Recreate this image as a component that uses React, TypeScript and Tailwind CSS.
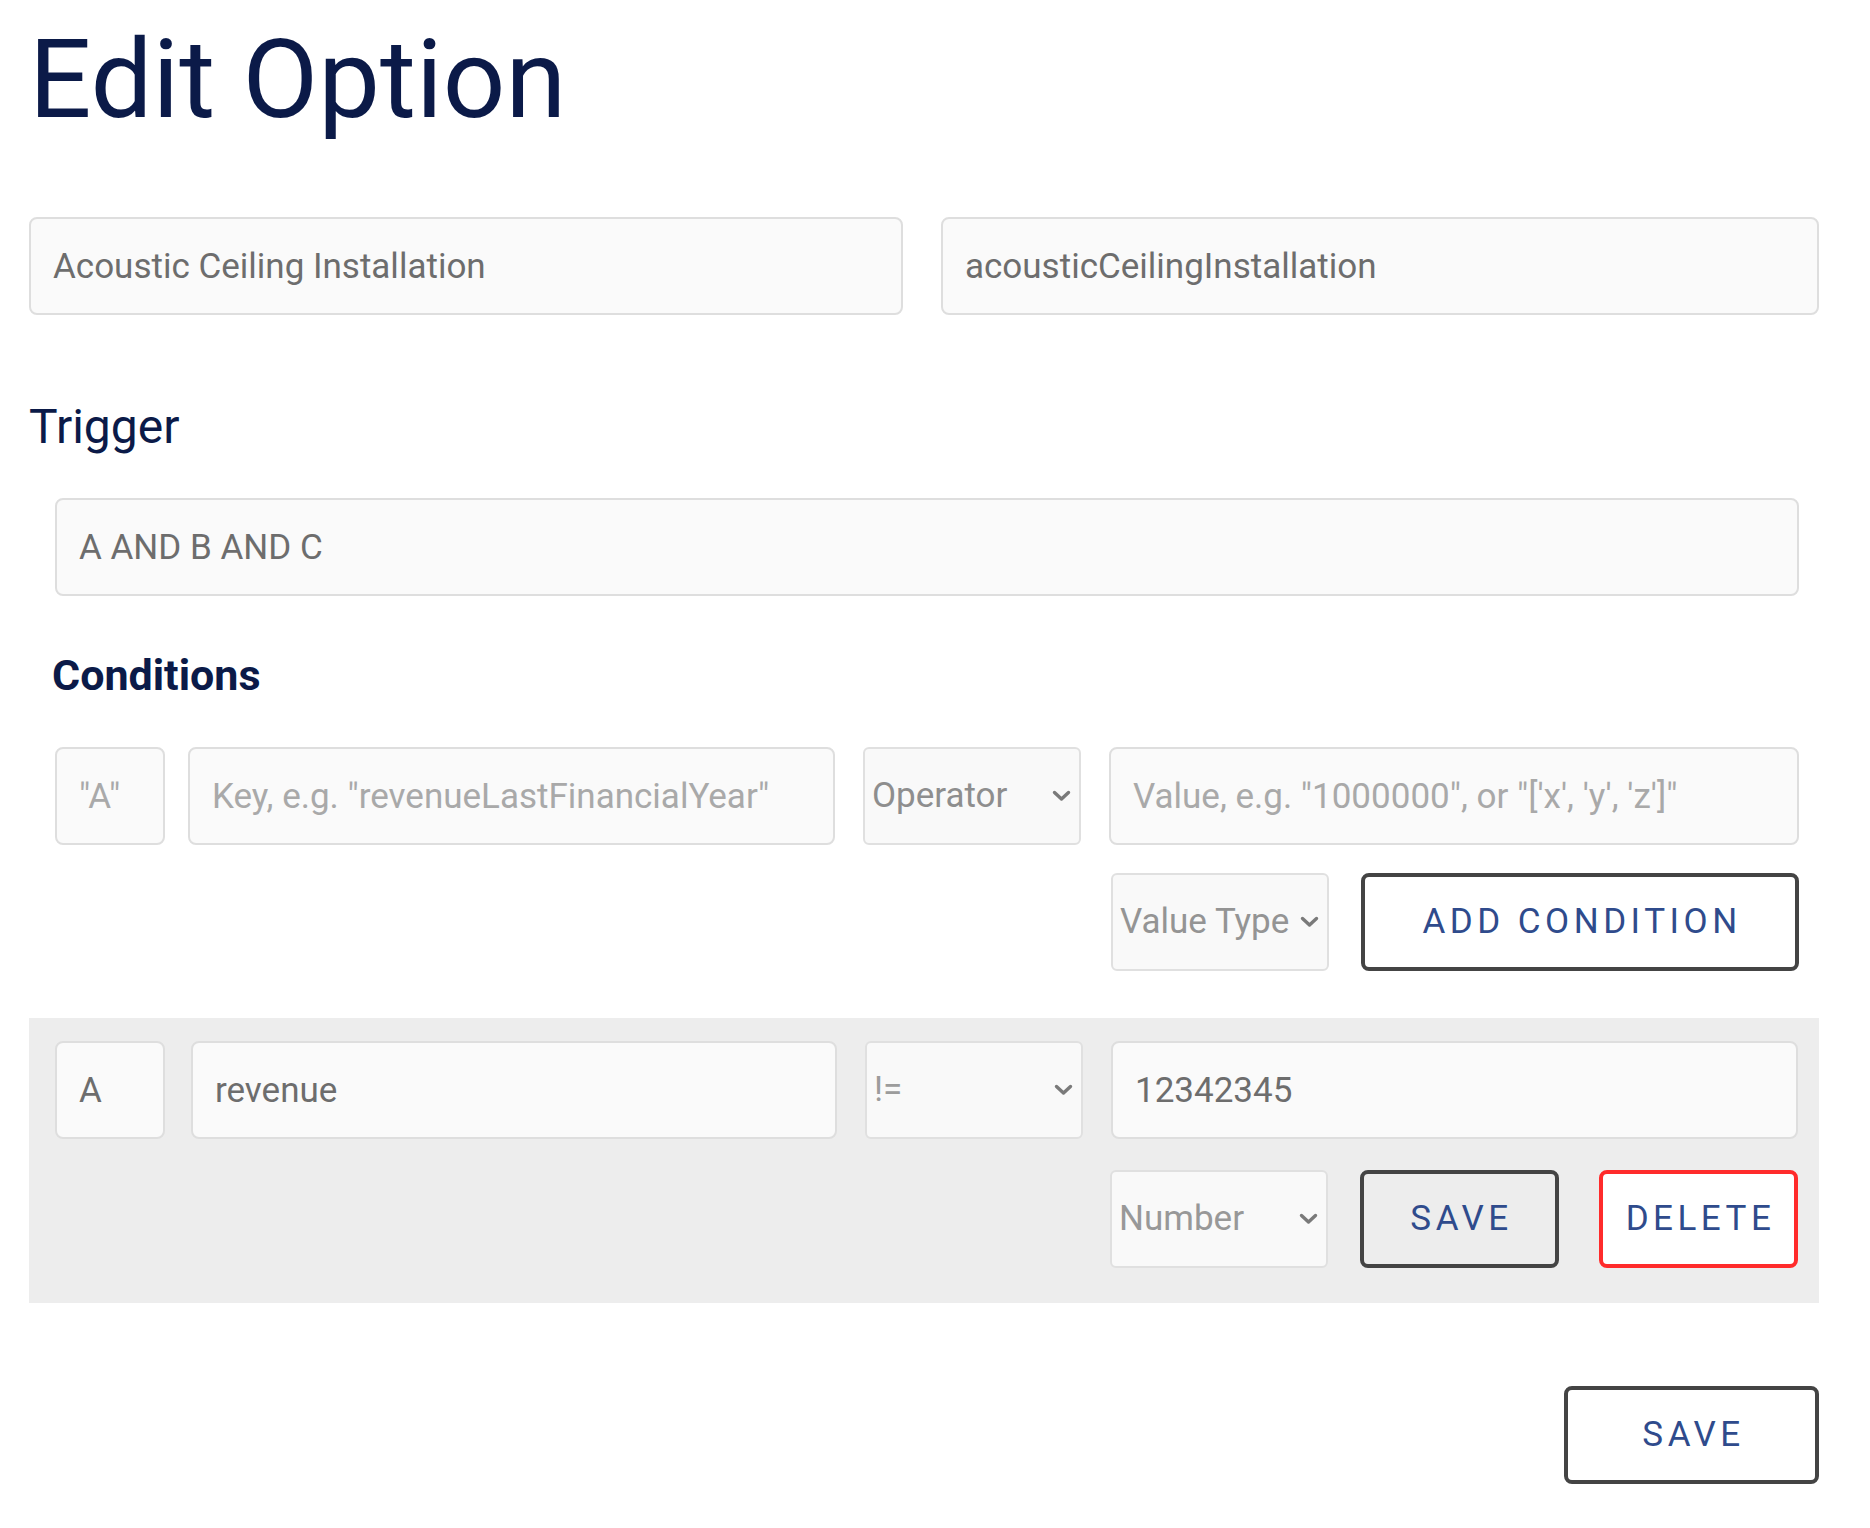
import React from "react";

// Reusable field pieces for the option editor
function Field({
  value,
  placeholder,
  className = "",
}: {
  value?: string;
  placeholder?: string;
  className?: string;
}) {
  return (
    <input
      readOnly
      defaultValue={value}
      placeholder={placeholder}
      className={`h-[98px] min-w-0 rounded-[8px] border-2 border-[#dedede] bg-[#fafafa] pl-[22px] pr-[12px] text-[35px] text-[#6d6d6d] outline-none placeholder:text-[#a9a9a9] ${className}`}
    />
  );
}

function Chevron() {
  return (
    <svg width="19" height="12" viewBox="0 0 19 12" className="shrink-0">
      <path d="M2.5 2.5 L9.5 9 L16.5 2.5" fill="none" stroke="#7a7a7a" strokeWidth="3.4" strokeLinecap="round" strokeLinejoin="round" />
    </svg>
  );
}

function SelectBox({ label, tone, className = "" }: { label: string; tone: string; className?: string }) {
  return (
    <div
      className={`flex h-[98px] w-[218px] shrink-0 items-center gap-[10px] rounded-[6px] border-2 border-[#e0e0e0] bg-[#f9f9f9] pl-[7px] pr-[8px] text-[35px] ${className}`}
    >
      <span className={`min-w-0 flex-1 overflow-hidden whitespace-nowrap ${tone}`}>{label}</span>
      <Chevron />
    </div>
  );
}

function OutlineButton({ label, className = "" }: { label: string; className?: string }) {
  return (
    <button
      type="button"
      className={`flex h-[98px] shrink-0 items-center justify-center rounded-[8px] border-4 pl-[4px] text-[35px] uppercase tracking-[4.5px] text-[#2f4b8c] ${className}`}
    >
      {label}
    </button>
  );
}

export default function App() {
  return (
    <div className="min-h-[1528px] bg-white pl-[29px] pr-[51px] pt-[25px] font-['Roboto',_'Noto_Sans',_sans-serif]">
      <h1 className="text-[110px] leading-[110px] text-[#0b1a48]">Edit Option</h1>

      {/* Name + key */}
      <div className="mt-[82px] grid grid-cols-[874px_1fr] gap-[38px]">
        <Field value="Acoustic Ceiling Installation" />
        <Field value="acousticCeilingInstallation" />
      </div>

      <h2 className="mt-[88px] text-[48px] leading-[48px] text-[#0b1a48]">Trigger</h2>

      <div className="pl-[26px] pr-[20px]">
        <Field value="A AND B AND C" className="mt-[47px] w-full" />

        <h3 className="mt-[58px] -ml-[3px] text-[43px] font-bold leading-[43px] text-[#0b1a48]">Conditions</h3>

        {/* New condition */}
        <div className="mt-[50px] flex">
          <Field placeholder={'"A"'} className="w-[110px] shrink-0" />
          <Field placeholder={'Key, e.g. "revenueLastFinancialYear"'} className="ml-[23px] w-[647px] shrink-0" />
          <SelectBox label="Operator" tone="text-[#8e8e8e]" className="ml-[28px]" />
          <Field placeholder={"Value, e.g. \"1000000\", or \"['x', 'y', 'z']\""} className="ml-[28px] flex-1" />
        </div>
        <div className="mt-[28px] flex justify-end">
          <SelectBox label="Value Type" tone="text-[#949494]" className="rounded-[4px] bg-[#f7f7f7]" />
          <OutlineButton label="Add Condition" className="ml-[32px] w-[438px] border-[#444444] bg-white" />
        </div>
      </div>

      {/* Existing condition */}
      <div className="mt-[47px] bg-[#ededed] pb-[35px] pl-[26px] pr-[21px] pt-[23px]">
        <div className="flex">
          <Field value="A" className="w-[110px] shrink-0" />
          <Field value="revenue" className="ml-[26px] w-[646px] shrink-0" />
          <SelectBox label="!=" tone="text-[#9c9c9c]" className="ml-[28px]" />
          <Field value="12342345" className="ml-[28px] flex-1" />
        </div>
        <div className="mt-[31px] flex justify-end">
          <SelectBox label="Number" tone="text-[#989898]" className="rounded-[4px] bg-[#f9f9f9]" />
          <OutlineButton label="Save" className="ml-[32px] w-[199px] border-[#444444] bg-[#ededed]" />
          <OutlineButton label="Delete" className="ml-[40px] w-[199px] border-[#ff2b2b] bg-white" />
        </div>
      </div>

      <div className="mt-[83px] flex justify-end">
        <OutlineButton label="Save" className="w-[255px] border-[#444444] bg-white" />
      </div>
    </div>
  );
}
